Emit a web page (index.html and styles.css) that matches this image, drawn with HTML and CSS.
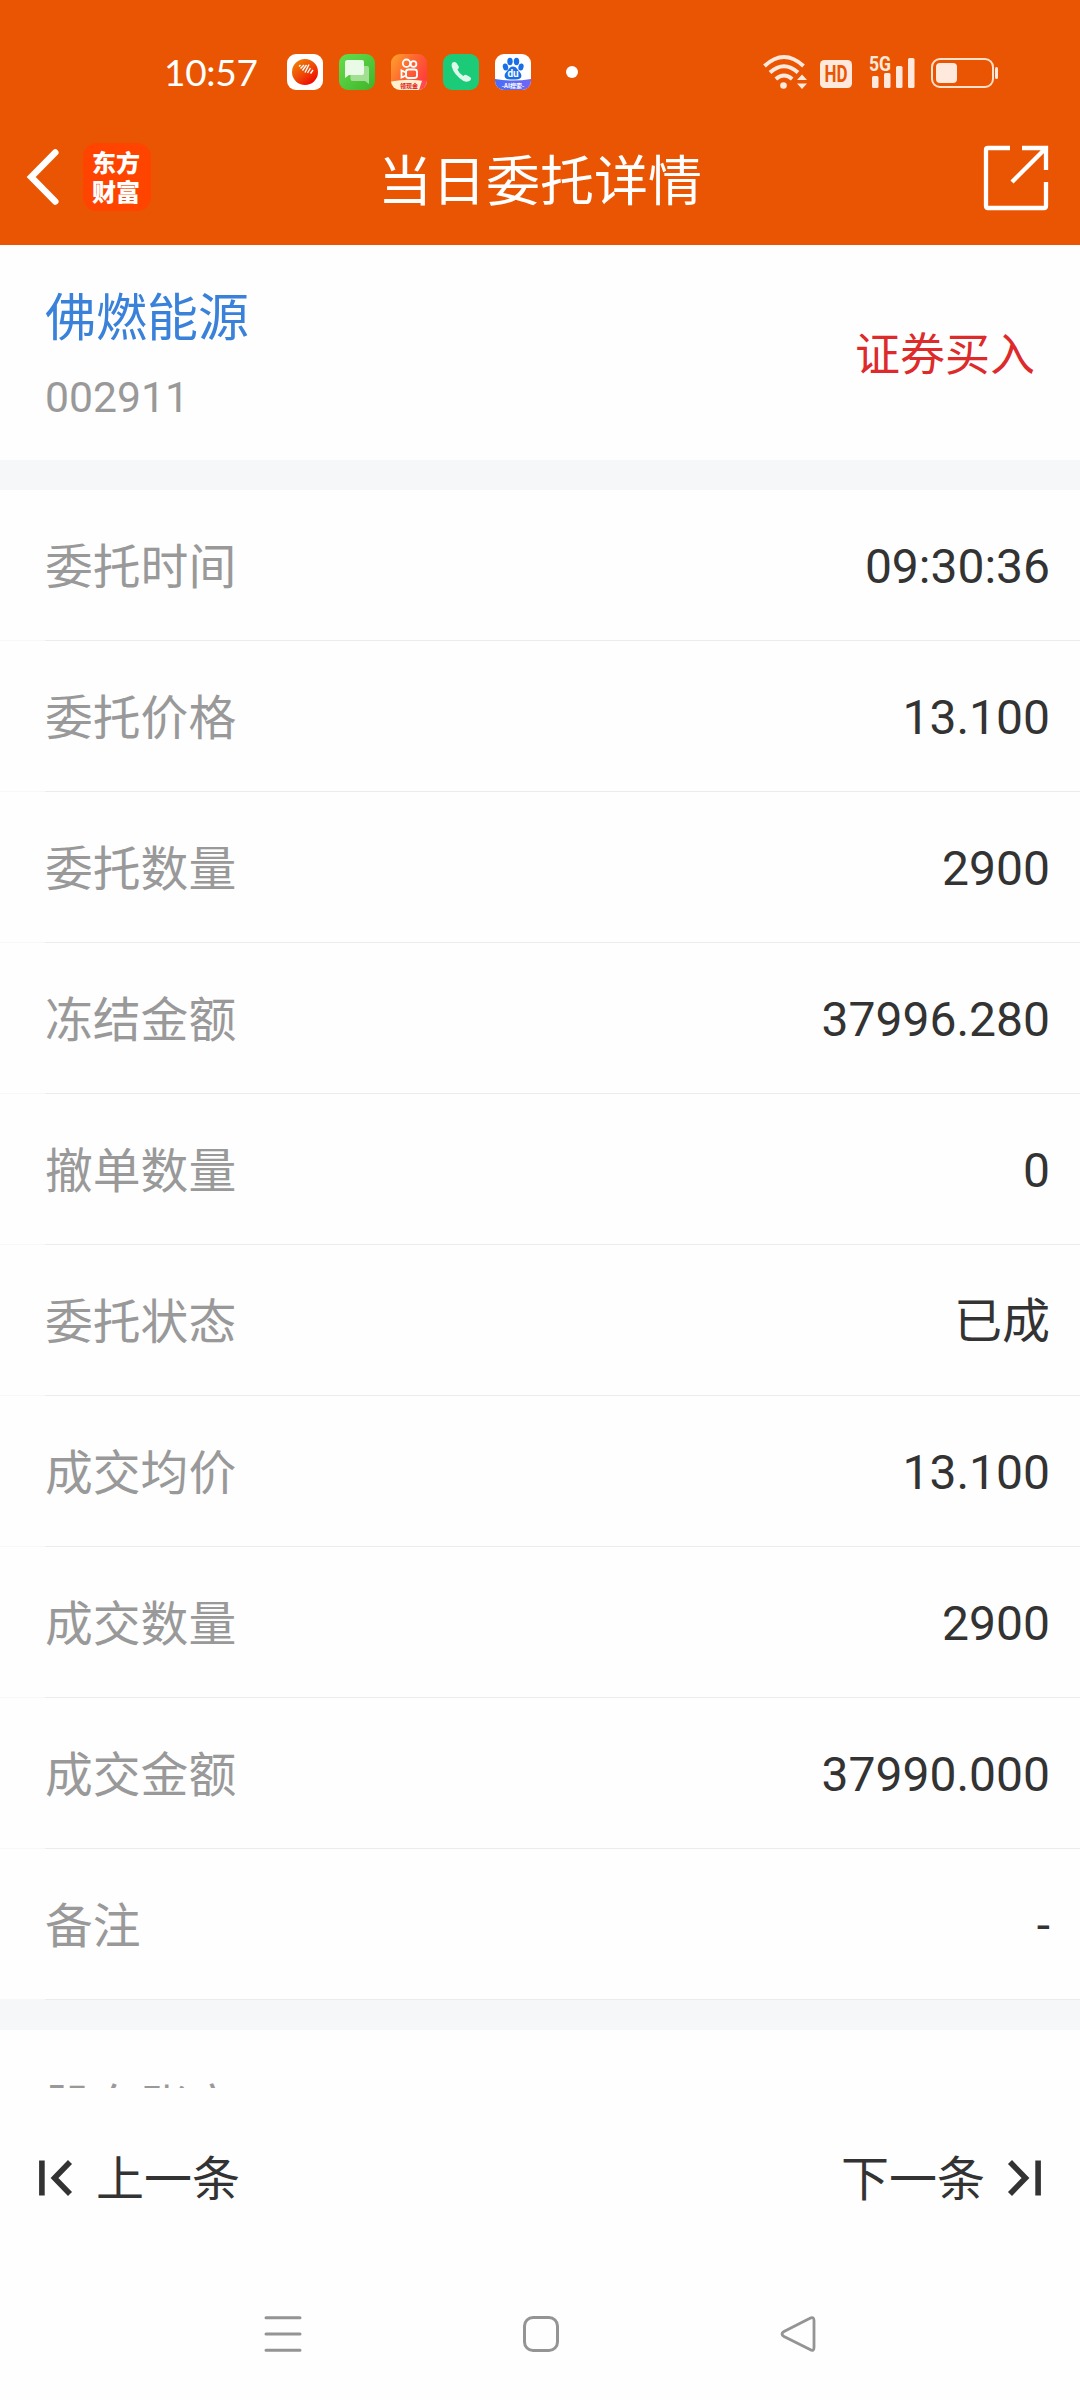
FILE: index.html
```html
<!DOCTYPE html>
<html lang="zh-CN">
<head>
<meta charset="utf-8">
<title>当日委托详情</title>
<link rel="stylesheet" href="styles.css">
</head>
<body>
<div class="screen">
  <header class="top">
    <div class="status">
      <span class="clock">10:57</span>
      <div class="apps">
        <svg class="app" viewBox="0 0 36 36">
          <defs><linearGradient id="ball" x1="0" y1="0" x2=".8" y2="1"><stop offset="0" stop-color="#f28a00"/><stop offset=".55" stop-color="#ee4a08"/><stop offset="1" stop-color="#f00000"/></linearGradient></defs>
          <rect width="36" height="36" rx="9" fill="#fff"/>
          <circle cx="18" cy="18" r="13" fill="url(#ball)"/>
          <path d="M12 12.500l1.500-1.500M13.500 14.500l3.500-3.500M15.500 16.500l4-5.500M18 18.500l4-8M20.500 19l3-5M23.500 19.500l2.500-3.500" stroke="#fff" stroke-width="1.400" fill="none"/>
        </svg>
        <svg class="app" viewBox="0 0 36 36">
          <defs><linearGradient id="msg" x1="0" y1="0" x2="1" y2="1"><stop offset="0" stop-color="#66dd4c"/><stop offset="1" stop-color="#3fb42b"/></linearGradient></defs>
          <rect width="36" height="36" rx="9" fill="url(#msg)"/>
          <path d="M14 12h14q2 0 2 2v16l-4-3H13.500q-2 0-2-2V14q0-2 2.500-2z" fill="#a2df93"/>
          <path d="M8.500 6H23q2 0 2 2v11q0 2-2 2H10l-4 3V8.500Q6 6 8.500 6z" fill="#e9fae6"/>
        </svg>
        <svg class="app" viewBox="0 0 36 36">
          <defs><linearGradient id="kw" x1="0" y1="0" x2="1" y2=".6"><stop offset="0" stop-color="#ffa52a"/><stop offset=".5" stop-color="#ff6831"/><stop offset="1" stop-color="#ff3f3d"/></linearGradient><clipPath id="kc"><rect width="36" height="36" rx="9"/></clipPath></defs>
          <g clip-path="url(#kc)"><rect width="36" height="36" fill="url(#kw)"/>
          <path d="M0 27.500Q18 24 36 27.500V36H0z" fill="#fff0cf"/><path d="M28 36l3-9 5-.500V36z" fill="#ff4a52"/></g>
          <g fill="none" stroke="#fff" stroke-width="1.800"><circle cx="15.500" cy="9.200" r="3.700"/><circle cx="22.500" cy="10" r="2.900"/><rect x="15" y="15.500" width="11" height="8.500" rx="2.500"/><path d="M15 18.500l-4.500-2v7l4.500-2z"/></g>
          <text x="18" y="34" class="tiny red">领现金</text>
        </svg>
        <svg class="app" viewBox="0 0 36 36">
          <rect width="36" height="36" rx="9" fill="#1ccb78"/>
          <path d="M9.500 8.500Q12 7.500 13.500 9l2.300 3.400q.8 1.600-1.300 3.100 1.500 4 5.800 6.500 2-1.800 3.700-.8l3.400 2.100q1.600 1.500-.2 3.300-2.700 2-6.700.4Q11 21 8.700 12.500 8.300 9.800 9.500 8.500z" fill="#ddf9eb"/>
        </svg>
        <svg class="app" viewBox="0 0 36 36">
          <defs><clipPath id="bc"><rect width="36" height="36" rx="9"/></clipPath><linearGradient id="bd" x1="0" y1="0" x2="1" y2="0"><stop offset="0" stop-color="#4a6cf7"/><stop offset="1" stop-color="#7166f4"/></linearGradient></defs>
          <g clip-path="url(#bc)"><rect width="36" height="36" fill="#fff"/><path d="M0 25q18 3 36 0v11H0z" fill="url(#bd)"/></g>
          <g fill="#1a6fe8"><ellipse cx="10.500" cy="13" rx="2.700" ry="3.500" transform="rotate(-12 10.500 13)"/><ellipse cx="15" cy="7.500" rx="2.700" ry="3.700"/><ellipse cx="21.500" cy="7.500" rx="2.700" ry="3.700"/><ellipse cx="26" cy="13" rx="2.600" ry="3.500" transform="rotate(12 26 13)"/><path d="M18 12.500c3.500 0 4 3 6.500 5.200 2.500 2.300 3 7-1.500 7.600-3 .4-7 .4-10 0-4.500-.6-4-5.300-1.500-7.600C14 15.500 14.500 12.500 18 12.500z"/></g>
          <text x="18" y="22.800" class="du">du</text><text x="18" y="33.500" class="tiny">-AI搜索-</text>
        </svg>
      </div>
      <i class="dot"></i>
      <svg class="signals" viewBox="0 0 240 40">
        <g fill="none" stroke="#ffe9dc" stroke-width="4"><path d="M1.500 12Q21-6 40.500 12"/><path d="M7 18.500q14-12.500 28 0"/><path d="M12.800 25q8.200-7 16.400 0"/></g>
        <circle cx="20.500" cy="31.500" r="3.300" fill="#ffe9dc"/>
        <path d="M34 26l5-5.500 5 5.500zM34 29.500h10L39 35z" fill="#ffe9dc"/>
        <rect x="57" y="6" width="32" height="28" rx="4.500" fill="#ffe9dc"/>
        <text x="73" y="28" class="hd" textLength="23" lengthAdjust="spacingAndGlyphs">HD</text>
        <text x="117" y="17" class="fiveg" textLength="22" lengthAdjust="spacingAndGlyphs">5G</text>
        <g fill="#ffe9dc"><rect x="109" y="22" width="6.500" height="12" rx="1.500"/><rect x="121" y="19" width="6.500" height="15" rx="1.500"/><rect x="133" y="12" width="6.500" height="22" rx="1.500"/><rect x="145" y="4" width="6.500" height="30" rx="1.500"/>
        <rect x="173" y="9" width="21" height="20" rx="4"/><rect x="232" y="13" width="3" height="12" rx="1.500"/></g>
        <rect x="169" y="5" width="61" height="28" rx="8" fill="none" stroke="#ffe0c8" stroke-width="2"/>
      </svg>
    </div>
    <nav class="bar">
      <svg class="back" viewBox="0 0 34 56"><path d="M29.300 3.500L5.200 28l24.100 24.500" fill="none" stroke="#fff" stroke-width="6.500" stroke-linecap="round"/></svg>
      <div class="brand">东方<br>财富</div>
      <h1 class="title">当日委托详情</h1>
      <svg class="share" viewBox="0 0 64 64"><path d="M26 2H4Q2 2 2 4v56q0 2 2 2h56q2 0 2-2V36M38 2h24v22M61 3L28 36" fill="none" stroke="#fff" stroke-width="4.300"/></svg>
    </nav>
  </header>

  <section class="stock">
    <div><div class="name">佛燃能源</div><div class="code">002911</div></div>
    <div class="side">证券买入</div>
  </section>

  <main class="list">
    <div class="row"><span class="label">委托时间</span><span class="value">09:30:36</span></div>
    <div class="row"><span class="label">委托价格</span><span class="value">13.100</span></div>
    <div class="row"><span class="label">委托数量</span><span class="value">2900</span></div>
    <div class="row"><span class="label">冻结金额</span><span class="value">37996.280</span></div>
    <div class="row"><span class="label">撤单数量</span><span class="value">0</span></div>
    <div class="row"><span class="label">委托状态</span><span class="value">已成</span></div>
    <div class="row"><span class="label">成交均价</span><span class="value">13.100</span></div>
    <div class="row"><span class="label">成交数量</span><span class="value">2900</span></div>
    <div class="row"><span class="label">成交金额</span><span class="value">37990.000</span></div>
    <div class="row"><span class="label">备注</span><span class="value">-</span></div>
  </main>
  <section class="more"><div class="row"><span class="label">股东账户</span></div></section>

  <footer class="pager">
    <div class="page"><svg class="step" viewBox="0 0 33 36"><path d="M2.900 .5v35M31 2L15.500 18 31 34" fill="none" stroke="#333" stroke-width="5.600"/></svg><span>上一条</span></div>
    <div class="page next"><span>下一条</span><svg class="step" viewBox="0 0 33 36"><path d="M30.100 .5v35M2 2l15.500 16L2 34" fill="none" stroke="#333" stroke-width="5.600"/></svg></div>
  </footer>
  <div class="system">
    <svg viewBox="0 0 36 36"><path d="M1 1.700h34M1 18h34M1 34.300h34" stroke="#949494" stroke-width="3" stroke-linecap="round"/></svg>
    <svg viewBox="0 0 36 36"><rect x="1.500" y="1.500" width="33" height="33" rx="8.500" fill="none" stroke="#949494" stroke-width="3"/></svg>
    <svg viewBox="0 0 36 36"><path d="M29.500 2.500q4.500-2.500 4.500 2v27q0 4.500-4 2L4 20.500q-4-2.500 0-5z" fill="none" stroke="#949494" stroke-width="2.800"/></svg>
  </div>
</div>
</body>
</html>
```
FILE: styles.css
```css
* { box-sizing: border-box; }
body { margin: 0; background: #fefefe; font-family: Roboto, "Noto Sans CJK SC", sans-serif; color: #333; }
.screen { display: flex; flex-direction: column; width: 1080px; height: 2400px; overflow: hidden; }
svg { display: block; flex: none; overflow: visible; }

.top { height: 245px; background: #ea5504; color: #fff; }
.status { display: flex; align-items: center; height: 112px; padding: 32px 77px 0 164px; }
.clock { width: 123px; font: 37px/40px Lato, sans-serif; letter-spacing: -0.3px; }
.apps { display: flex; gap: 16px; }
.app { width: 36px; height: 36px; }
.tiny { font: bold 6px "Noto Sans CJK SC", sans-serif; fill: #fff; text-anchor: middle; }
.red { fill: #e02020; }
.du { font: bold 10px Roboto, sans-serif; fill: #fff; text-anchor: middle; }
.dot { width: 12px; height: 12px; margin-left: 35px; border-radius: 50%; background: #fff; }
.signals { width: 240px; height: 40px; margin: 3px 0 0 auto; }
.hd { font: bold 24px Roboto, sans-serif; fill: #ea5504; text-anchor: middle; }
.fiveg { font: bold 20px Roboto, sans-serif; fill: #ffe9dc; text-anchor: middle; }

.bar { display: grid; grid-template-columns: 34px 68px 1fr 64px; align-items: center; height: 130px; padding: 0 32px 0 26px; }
.back { width: 34px; height: 56px; }
.brand { width: 68px; height: 68px; margin-left: 23px; border-radius: 14px; background: #ff4400; font: 900 24px/29px "Noto Sans CJK SC", sans-serif; text-align: center; padding: 4px 2px 0 0; }
.title { grid-column: 3; margin: 11px 0 0; padding-right: 32px; font-size: 54px; font-weight: 400; line-height: 70px; text-align: center; }
.share { width: 64px; height: 64px; margin-top: 1px; }

.stock { display: flex; justify-content: space-between; height: 215px; padding: 39px 45px 0; }
.name { font-size: 51px; line-height: 70px; color: #3a81da; }
.code { margin-top: 13px; font-size: 42.700px; line-height: 60px; color: #999; }
.side { font-size: 45px; line-height: 60px; margin-top: 42px; color: #dd2a2a; }

.list { border-top: 30px solid #f6f7f9; }
.row { display: flex; justify-content: space-between; align-items: center; height: 151px; padding: 2px 30px 0 45px; background: linear-gradient(90deg, #f7f7f7 45px, #ececec 45px) bottom / 100% 1px no-repeat; font-size: 48px; line-height: 70px; }
.label { padding-top: 2px; font-size: 47.800px; color: #999; }
.more { height: 88px; border-top: 30px solid #f6f7f9; overflow: hidden; }

.pager { display: flex; justify-content: space-between; height: 180px; padding: 0 39px; align-items: center; font-size: 48px; line-height: 70px; }
.page { display: flex; align-items: center; gap: 24px; }
.page span { padding-top: 4px; }
.next { gap: 23px; }
.step { width: 33px; height: 36px; }
.system { display: flex; justify-content: space-between; padding: 48px 264px 0 265px; }
.system svg { width: 36px; height: 36px; }
```
